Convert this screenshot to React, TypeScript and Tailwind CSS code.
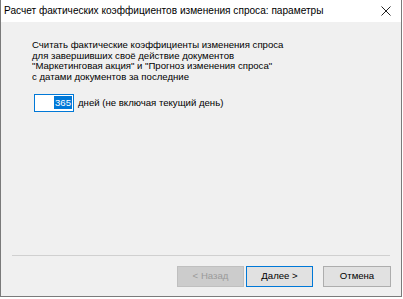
import React from 'react';

const font = { fontFamily: '"Liberation Sans", Arial, sans-serif' };

export default function App() {
  return (
    <div className="w-[403px] h-[299px] bg-white" style={font}>
      <div className="w-[402px] h-[297px] flex flex-col border-l border-r border-b border-[#7a7a7a] bg-[#f0f0f0]">
        {/* title bar */}
        <div className="h-[22px] bg-white flex items-center justify-between pl-[3px] pr-[10px]">
          <span className="text-[10.1px] text-black">Расчет фактических коэффициентов изменения спроса: параметры</span>
          <svg width="10" height="10" viewBox="0 0 10 10" className="text-[#222]">
            <path d="M0.5 0.5 L9.5 9.5 M9.5 0.5 L0.5 9.5" stroke="currentColor" strokeWidth="1" />
          </svg>
        </div>

        <div className="flex-1 flex flex-col">
          <div className="pl-[31px] pt-[18px] text-[9.6px] leading-[10.7px] text-black">
            <p>Считать фактические коэффициенты изменения спроса</p>
            <p>для завершивших своё действие документов</p>
            <p>"Маркетинговая акция" и "Прогноз изменения спроса"</p>
            <p>с датами документов за последние</p>
          </div>

          <div className="flex items-center pl-[33px] mt-[11px] gap-[4px]">
            <div className="w-[40px] h-[18px] border border-[#0078d7] bg-white flex items-center justify-end pr-[1px]">
              <span className="bg-[#0078d7] text-white text-[9.6px] leading-[13px] px-[1px]">365</span>
            </div>
            <span className="text-[9.6px] text-black">дней (не включая текущий день)</span>
          </div>

          <div className="flex-1" />

          <div className="mx-[11px] h-[2px] border-t border-[#d0d0d0] border-b-white" />

          <div className="flex justify-end items-center pr-[10px] pt-[9px] pb-[9px] text-[9.6px]">
            <button className="w-[67px] h-[21px] bg-[#cccccc] border border-[#bfbfbf] text-[#9a9a9a]">&lt; Назад</button>
            <button className="w-[67px] h-[21px] ml-[2px] bg-[#e1e1e1] border border-[#0078d7] text-black">Далее &gt;</button>
            <button className="w-[68px] h-[21px] ml-[10px] bg-[#e1e1e1] border border-[#adadad] text-black">Отмена</button>
          </div>
        </div>
      </div>
    </div>
  );
}
